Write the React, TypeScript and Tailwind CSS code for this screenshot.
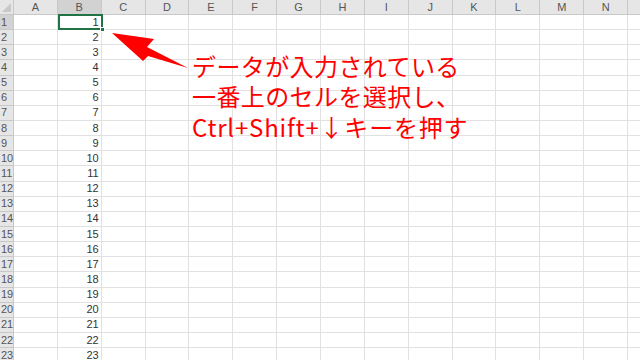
import React from "react";

const COLS = ["A","B","C","D","E","F","G","H","I","J","K","L","M","N"];
const ROWS = Array.from({ length: 23 }, (_, i) => i + 1);

export default function App() {
  return (
    <div className="relative w-[640px] h-[360px] overflow-hidden bg-white" style={{ fontFamily: '"Liberation Sans", "Noto Sans CJK JP", sans-serif' }}>
      <div className="grid grid-cols-[14px_repeat(14,43.86px)_1fr] grid-rows-[15px_repeat(23,15.15px)] text-[11px] leading-none">
        <div className="relative bg-[#e6e6e6] border-r border-b border-[#c8c8c8]">
          <div className="absolute right-[2px] bottom-[2px] w-0 h-0 border-l-[9px] border-l-transparent border-b-[9px] border-b-[#c8c8c8]" />
        </div>
        {COLS.map((c) => (
          <div key={c} className={`flex items-center justify-center border-r border-b border-[#c8c8c8] text-[#555] ${c === "B" ? "bg-[#d2d2d2]" : "bg-[#e6e6e6]"}`}>{c}</div>
        ))}
        <div className="bg-[#e6e6e6] border-b border-[#c8c8c8]" />
        {ROWS.map((r) => (
          <React.Fragment key={r}>
            <div className={`flex items-center pl-[1px] border-r border-b border-[#c8c8c8] text-[#555] ${r === 1 ? "bg-[#d2d2d2]" : "bg-[#e6e6e6]"}`}>{r}</div>
            {COLS.map((c) => (
              <div key={c} className="flex items-center justify-end pr-[2px] border-r border-b border-[#e1e1e1] text-[#333]">
                {c === "B" ? r : ""}
              </div>
            ))}
            <div className="border-b border-[#e1e1e1]" />
          </React.Fragment>
        ))}
      </div>

      {/* selection */}
      <div className="absolute left-[58px] top-[14px] w-[45px] h-[16px] border-2 border-[#217346]" />
      <div className="absolute left-[100px] top-[27px] w-[5px] h-[5px] bg-[#217346] border border-white" />

      {/* arrow */}
      <svg className="absolute left-0 top-0" width="640" height="360" viewBox="0 0 640 360">
        <polygon points="112,33 154,39 147,47 188,68 148,56 143,61" fill="#ff0000" />
      </svg>

      {/* annotation */}
      <div className="absolute left-[192px] top-[51px] flex flex-col text-[24px] leading-[30px] text-[#ff0000] whitespace-nowrap" style={{ fontFamily: '"Noto Sans CJK JP", sans-serif' }}>
        <span className="tracking-[0.4px]">データが入力されている</span>
        <span className="tracking-[0.4px]">一番上のセルを選択し、</span>
        <span className="mt-[1px] tracking-[0.8px]">Ctrl+Shift+↓キーを押す</span>
      </div>
    </div>
  );
}
